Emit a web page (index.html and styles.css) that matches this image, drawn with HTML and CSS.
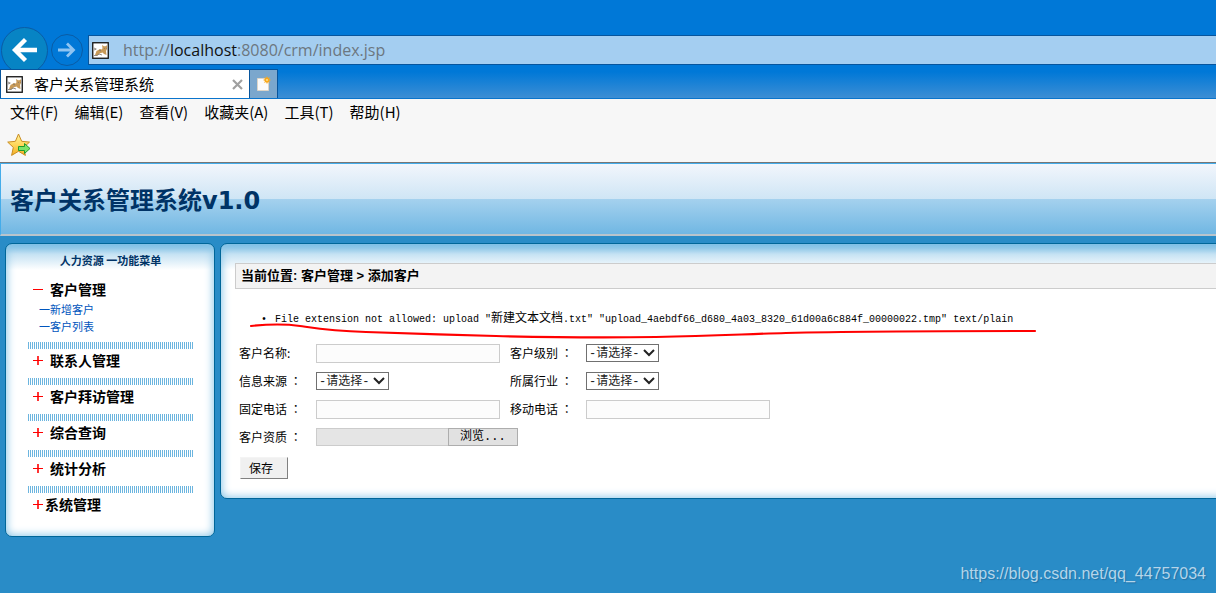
FILE: index.html
```html
<!DOCTYPE html>
<html lang="zh-CN">
<head>
<meta charset="utf-8">
<title>客户关系管理系统</title>
<link rel="stylesheet" href="styles.css">
</head>
<body>
<svg class="defs" aria-hidden="true">
  <symbol id="cat" viewBox="0 0 17 17">
    <rect x=".75" y=".75" width="15.500" height="15.500" fill="#fff" stroke="#111" stroke-width="1.300"/>
    <path d="M3 13l1.500-4 3.500-2 2 .5L10.500 6 10 3l2 1.200h1.500L15 3.200V7l-1 2 .5 4-2.500-1-1.500-1.500-3 1-2 2z" fill="#c89a58"/>
    <path d="M2 6l2 1M2 8l2.500-1M2 13.500h3l2-1.500 3 1M7 8l2 1M12 6.500h.8M14 6.500h.5" fill="none" stroke="#77706a" stroke-width=".8"/>
  </symbol>
  <symbol id="plus" viewBox="0 0 11 11"><path d="M0 5.500h10" stroke="#f00"/><path d="M5 1v9" stroke="#f00" stroke-width="1.600"/></symbol>
  <symbol id="minus" viewBox="0 0 11 11"><path d="M0 5.500h10" stroke="#f00" fill="none"/></symbol>
</svg>

<div class="browser">
  <div class="toolbar">
    <button class="nav back" type="button" aria-label="后退">
      <svg viewBox="0 0 28 28" width="28" height="28"><path d="M26 14H5M14.500 3.500L4 14l10.500 10.500" fill="none" stroke="#fff" stroke-width="4.300"/></svg>
    </button>
    <button class="nav forward" type="button" aria-label="前进">
      <svg viewBox="0 0 18 18" width="18" height="18"><path d="M0 9h15M9 2.500L15.500 9 9 15.500" fill="none" stroke="#8ec4f2" stroke-width="2.800"/></svg>
    </button>
    <div class="address">
      <svg class="favicon"><use href="#cat"/></svg>
      <span class="url">http://<b>localhost</b>:8080/crm/index.jsp</span>
    </div>
  </div>
  <div class="tabs">
    <div class="tab">
      <svg class="favicon"><use href="#cat"/></svg>
      <span class="tab-title">客户关系管理系统</span>
      <button class="close" type="button" aria-label="关闭">
        <svg viewBox="0 0 11 11" width="11" height="11"><path d="M1 1l9 9M10 1l-9 9" stroke="#a0a0a0" stroke-width="2.200"/></svg>
      </button>
    </div>
    <button class="new-tab" type="button" aria-label="新建标签页">
      <svg viewBox="0 0 16 16" width="16" height="16"><path d="M1.500 2.500h9v2h2v10h-11z" fill="#fbfbfb" stroke="#ddd5c8"/><path d="M11 0l1 2 2-1-1 2 2 1-2 1 1 2-2-1-1 2-1-2-2 1 1-2-2-1 2-1-1-2 2 1z" fill="#f9a91c"/><circle cx="11" cy="4" r="1" fill="#ffe28a"/></svg>
    </button>
  </div>
  <nav class="menubar">
    <button type="button">文件(F)</button>
    <button type="button">编辑(E)</button>
    <button type="button">查看(V)</button>
    <button type="button">收藏夹(A)</button>
    <button type="button">工具(T)</button>
    <button type="button">帮助(H)</button>
  </nav>
  <div class="favorites">
    <button type="button" aria-label="添加到收藏夹栏">
      <svg viewBox="0 0 24 24" width="24" height="24">
        <defs><linearGradient id="gold" x2="0" y2="1"><stop stop-color="#fff3a0"/><stop offset=".5" stop-color="#ffd75a"/><stop offset="1" stop-color="#f3ae25"/></linearGradient></defs>
        <path d="M11.500 1l3.200 7.300 7.800.8-5.800 5.300 1.700 8-6.900-4.100-6.900 4.100 1.700-8L.7 9.100l7.700-.8z" fill="url(#gold)" stroke="#c98d22" stroke-linejoin="round"/>
        <path d="M11.500 13.500h6v-3l5.500 5-5.500 5v-3h-6z" fill="#7be36a" stroke="#219a2c"/>
      </svg>
    </button>
  </div>
</div>

<header class="banner"><h1>客户关系管理系统v1.0</h1></header>

<div class="workspace">
  <aside class="panel sidebar">
    <h2>人力资源 一功能菜单</h2>
    <ul class="menu">
      <li><a class="entry" href="#"><svg><use href="#minus"/></svg>客户管理</a>
        <ul class="submenu">
          <li><a href="#">一新增客户</a></li>
          <li><a href="#">一客户列表</a></li>
        </ul>
      </li>
      <li><a class="entry" href="#"><svg><use href="#plus"/></svg>联系人管理</a></li>
      <li><a class="entry" href="#"><svg><use href="#plus"/></svg>客户拜访管理</a></li>
      <li><a class="entry" href="#"><svg><use href="#plus"/></svg>综合查询</a></li>
      <li><a class="entry" href="#"><svg><use href="#plus"/></svg>统计分析</a></li>
      <li><a class="entry tight" href="#"><svg><use href="#plus"/></svg>系统管理</a></li>
    </ul>
  </aside>

  <main class="panel content">
    <div class="crumbs">当前位置: 客户管理 &gt; 添加客户</div>
    <div class="notice">
      <ul class="errors"><li><span class="dot">•</span>File extension not allowed: upload "<span class="cjk">新建文本文档</span>.txt" "upload_4aebdf66_d680_4a03_8320_61d00a6c884f_00000022.tmp" text/plain</li></ul>
      <svg class="underline" viewBox="0 0 792 16" width="792" height="16" aria-hidden="true"><path d="M1 3C20 1 36 1 50 3S80 8 116 9s90 3 130 4 100 2 160 1 90-3 130-4 120-2 249-2" fill="none" stroke="#f00" stroke-width="2.200" stroke-linecap="round"/></svg>
    </div>
    <form class="form">
      <label for="name">客户名称:</label><input class="text" id="name" type="text">
      <label for="level">客户级别 <span class="colon" lang="zh-TW">：</span></label>
      <span class="pick"><select id="level"><option>-请选择-</option></select><svg viewBox="0 0 12 8"><path d="M1 1l5 5 5-5" fill="none" stroke="#222" stroke-width="2"/></svg></span>
      <label for="source">信息来源 <span class="colon" lang="zh-TW">：</span></label>
      <span class="pick"><select id="source"><option>-请选择-</option></select><svg viewBox="0 0 12 8"><path d="M1 1l5 5 5-5" fill="none" stroke="#222" stroke-width="2"/></svg></span>
      <label for="trade">所属行业 <span class="colon" lang="zh-TW">：</span></label>
      <span class="pick"><select id="trade"><option>-请选择-</option></select><svg viewBox="0 0 12 8"><path d="M1 1l5 5 5-5" fill="none" stroke="#222" stroke-width="2"/></svg></span>
      <label for="phone">固定电话 <span class="colon" lang="zh-TW">：</span></label><input class="text" id="phone" type="text">
      <label for="mobile">移动电话 <span class="colon" lang="zh-TW">：</span></label><input class="text" id="mobile" type="text">
      <label for="file">客户资质 <span class="colon" lang="zh-TW">：</span></label>
      <div class="upload"><input id="file" type="file"><label class="file-box" for="file"><span class="file-name"></span><span class="browse">浏览...</span></label></div>
      <button class="save" type="submit">保存</button>
    </form>
  </main>
</div>
<div class="watermark">https://blog.csdn.net/qq_44757034</div>
</body>
</html>
```
FILE: styles.css
```css
* { box-sizing: border-box; }

body {
  margin: 0;
  min-height: 100vh;
  position: relative;
  overflow-x: hidden;
  background: #298cc7;
  color: #000;
  font: 12px/16px "Liberation Sans", "Noto Sans CJK SC", sans-serif;
}

.defs { position: absolute; width: 0; height: 0; }
button { font: inherit; color: inherit; padding: 0; border: 0; background: none; }
ul { list-style: none; margin: 0; padding: 0; }
a { color: inherit; text-decoration: none; }
svg { display: block; flex: none; }

/* Browser frame */
.browser { background: #f7f7f7; border-bottom: 1px solid #767676; }
.toolbar {
  display: flex;
  align-items: center;
  height: 69px;
  padding: 31px 0 0 1px;
  background: #0078d7;
}
.nav {
  display: flex;
  align-items: center;
  justify-content: center;
  flex: none;
  border: 1px solid #0a5ca5;
  border-radius: 50%;
}
.back { width: 47px; height: 47px; background: #0784c4; }
.forward { width: 32px; height: 32px; margin: 0 5px 0 3px; }
.address {
  display: flex;
  align-items: center;
  flex: 1;
  height: 30px;
  padding-left: 3px;
  gap: 14px;
  background: #a4cef1;
  border: 1px solid #07559d;
  border-right: 0;
}
.favicon { width: 17px; height: 17px; }
.url { color: #6c7780; font: 16px/24px "Open Sans", "Noto Sans", sans-serif; }
.url b { color: #111; font-weight: 400; }
.tabs {
  position: relative;
  display: flex;
  height: 30px;
  border-bottom: 1px solid #0a74cc;
  background: linear-gradient(#0078d7 10%, #3d8ed4);
}
.tab {
  display: flex;
  align-items: center;
  width: 250px;
  padding: 0 6px 0 5px;
  background: #fff;
  border: 1px solid #07559d;
  border-bottom: 0;
}
.tab-title { flex: 1; padding-left: 11px; font: 15px/20px "Noto Sans CJK SC", sans-serif; }
.new-tab {
  display: flex;
  align-items: center;
  justify-content: center;
  width: 28px;
  background: #7ba7cd;
  border: 1px solid #07559d;
  border-width: 1px 1px 0 0;
}
.menubar {
  display: flex;
  gap: 16px;
  padding: 2px 10px 4px;
  font: 15px/22px "Noto Sans CJK SC", sans-serif;
}
.favorites { height: 35px; padding: 6px 7px; }

/* Banner */
.banner {
  height: 73px;
  padding: 21px 9px;
  border-left: 1px solid #44acea;
  border-top: 1px solid #44acea;
  border-bottom: 2px solid #b8c4cc;
  background: linear-gradient(#f2f6fc, #cfe5f5 50%, #a5d1ee 50%, #70b7e3);
}
h1 {
  margin: 0;
  color: #036;
  font: bold 24px/32px "DejaVu Sans", "Noto Sans CJK SC", sans-serif;
}

/* Panels */
.workspace {
  display: flex;
  align-items: flex-start;
  gap: 5px;
  padding: 7px 0 0 5px;
  overflow: hidden;
}
.panel {
  border: 1px solid #069;
  border-radius: 7px;
  background: linear-gradient(#72b8e2, #c5e2f3 10px, #fff 26px);
  box-shadow: inset 0 0 9px 1px #8cc7e8;
}
.sidebar { flex: none; width: 210px; padding: 8px 21px 14px 22px; }
.sidebar h2 { margin: 0 0 10px; color: #036; font: bold 11px/16px "Noto Sans CJK SC", sans-serif; text-align: center; }
.menu > li + li::before {
  content: "";
  display: block;
  height: 7px;
  background: repeating-linear-gradient(90deg, #6cb5df 0 1px, #fff 1px 2px);
}
.menu > li { padding-bottom: 7px; }
.entry {
  display: flex;
  align-items: center;
  gap: 6px;
  padding-left: 5px;
  font: bold 14px/22px "Noto Sans CJK SC", sans-serif;
}
.entry svg { width: 11px; height: 11px; }
.tight { gap: 1px; }
.submenu { padding: 1px 0 0 11px; color: #0055bd; font: 11px/17px "Noto Sans CJK SC", sans-serif; }

.content { flex: 1; min-width: 0; margin-right: -20px; padding: 19px 0 19px 14px; }
.crumbs {
  padding: 0 5px;
  border: 1px solid #ccc;
  background: #f3f3f3;
  font: bold 13px/24px "Liberation Sans", "Noto Sans CJK SC", sans-serif;
}
.notice { position: relative; padding: 21px 0 10px 26px; }
.errors { font: 10px/18px "Liberation Mono", "Noto Sans CJK SC", monospace; white-space: nowrap; }
.dot { display: inline-block; width: 14px; }
.cjk { font-size: 12px; }
.underline { position: absolute; left: 15px; top: 34px; }
.underline { overflow: visible; }

.form {
  display: grid;
  grid-template-columns: 72px 189px 71px 189px;
  grid-auto-rows: 28px;
  column-gap: 5px;
  align-items: center;
  padding-left: 4px;
  font: 12px/16px "Noto Sans CJK SC", sans-serif;
}
.colon { font-family: "Noto Sans CJK TC", sans-serif; }
.text { width: 184px; height: 19px; padding: 0 2px; border: 1px solid #ccc; background: #fcfcfc; font: inherit; }
.pick { position: relative; width: 73px; height: 18px; }
.pick select {
  display: block;
  width: 100%;
  height: 100%;
  padding: 1px 2px 0;
  appearance: none;
  border: 1px solid #707070;
  border-radius: 0;
  background: #fff;
  color: #222;
  font: 12px/16px "Liberation Mono", "Noto Sans CJK SC", monospace;
}
.pick svg { position: absolute; right: 4px; top: 5px; width: 12px; height: 8px; pointer-events: none; }
.upload { grid-column: 2 / -1; position: relative; }
.upload input { position: absolute; width: 1px; height: 1px; opacity: 0; }
.file-box { display: flex; width: 202px; height: 18px; }
.file-name { flex: 1; border: 1px solid #ccc; border-right: 0; background: #e5e5e5; }
.browse {
  width: 70px;
  padding-left: 11px;
  border: 1px solid #adadad;
  background: #e1e1e1;
  font: 12px/16px "Liberation Mono", "Noto Sans CJK SC", monospace;
}
.save {
  grid-column: 1;
  width: 48px;
  height: 22px;
  margin: 6px 0 0 1px;
  padding-right: 6px;
  border: 1px solid #f4f4f4;
  border-right-color: #808080;
  border-bottom-color: #808080;
  background: #f0f0f0;
}

.watermark {
  position: absolute;
  right: 10px;
  bottom: 9px;
  color: #b4d5ea;
  text-shadow: 1px 1px 1px #2272a5;
  font: 16px/20px "Liberation Sans", sans-serif;
}
```
